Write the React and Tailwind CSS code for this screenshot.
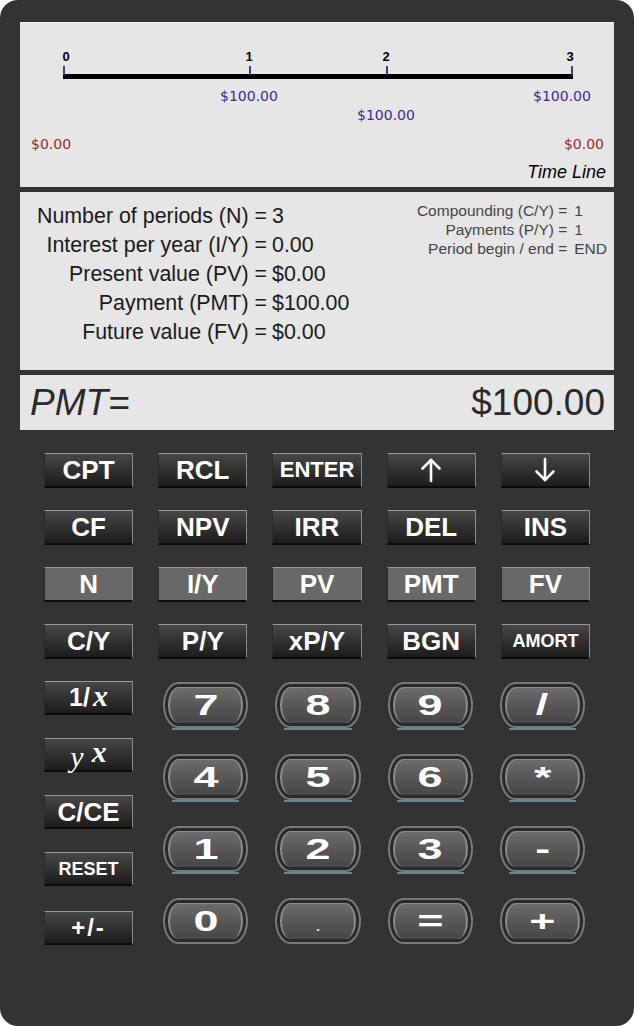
import React from 'react';

const FN_ROWS = [
  ['CPT', 'RCL', 'ENTER', 'UP', 'DOWN'],
  ['CF', 'NPV', 'IRR', 'DEL', 'INS'],
  ['N', 'I/Y', 'PV', 'PMT', 'FV'],
  ['C/Y', 'P/Y', 'xP/Y', 'BGN', 'AMORT'],
];

const TVM_KEYS = ['N', 'I/Y', 'PV', 'PMT', 'FV'];

const NUM_KEYS = ['7', '8', '9', '/', '4', '5', '6', '*', '1', '2', '3', '-', '0', '.', '=', '+'];

const serif = { fontFamily: '"Liberation Serif", serif' };

function Arrow({ up }) {
  return (
    <svg width="22" height="26" viewBox="0 0 22 26" fill="none" stroke="white" strokeWidth="2.6" strokeLinecap="round" strokeLinejoin="round">
      {up ? (
        <>
          <path d="M11 24V3" />
          <path d="M2.5 11.5L11 3l8.5 8.5" />
        </>
      ) : (
        <>
          <path d="M11 2v21" />
          <path d="M2.5 14.5L11 23l8.5-8.5" />
        </>
      )}
    </svg>
  );
}

const keyBase =
  'flex items-center justify-center text-white font-bold leading-none border-t border-t-[#9a9a9a] border-r border-r-[#8a8a8a] border-l border-l-[#2a2a2a] border-b-2 border-b-[#0a0a0a]';

function FnKey({ label, active }) {
  let content = label;
  if (label === 'UP') content = <Arrow up />;
  if (label === 'DOWN') content = <Arrow />;
  const size = label === 'ENTER' ? 'text-[22px]' : label === 'AMORT' ? 'text-[18px]' : 'text-[26px]';
  return (
    <div className={`h-[35px] ${keyBase} ${active ? 'bg-[#686868]' : 'bg-linear-to-b from-[#474747] to-[#1c1c1c]'} ${size}`}>
      {content}
    </div>
  );
}

function SideKey({ children, text = 'text-[26px]' }) {
  return (
    <div className={`h-[34px] ${keyBase} bg-linear-to-b from-[#474747] to-[#1c1c1c] ${text}`}>
      {children}
    </div>
  );
}

function NumKey({ label, last }) {
  return (
    <div className="h-[48px] flex flex-col">
      <div className="flex-1 rounded-[16px/24px] border-2 border-[#7a7a7a] bg-[#2a2a2a] p-[3px]">
        <div className="h-full rounded-[12px/20px] border-x-2 border-t border-[#8a8a8a] bg-linear-to-b from-[#6c6c6c] via-[#575757] to-[#464646] flex items-center justify-center">
          <span className="text-white font-black text-[29px] leading-none scale-x-[1.55] inline-block">
            {label === '.' ? <span className="text-[14px] font-normal">.</span> : label}
          </span>
        </div>
      </div>
      <div className={`h-[2px] mx-[9px] ${last ? 'bg-transparent' : 'bg-[#5d8a8a]'}`} />
    </div>
  );
}

export default function App() {
  return (
    <div className="bg-white w-[634px] h-[1026px]" style={{ fontFamily: '"Liberation Sans", Arial, sans-serif' }}>
      <div className="w-[634px] h-[1026px] bg-[#333333] rounded-[18px] pt-[22px]">
        {/* Time line */}
        <div className="mx-[20px] h-[165px] bg-[#e6e6e6] border-t border-t-[#f4f4f4] relative">
          <div className="absolute left-[43px] top-[51px] w-[510px] h-[5px] bg-black" />
          {[43, 229, 366, 551].map((x) => (
            <div key={x} className="absolute top-[43px] w-[2px] h-[9px] bg-[#4a3a7a]" style={{ left: x }} />
          ))}
          {[['0', 46], ['1', 229], ['2', 366], ['3', 550]].map(([t, x]) => (
            <div key={t} className="absolute top-[24px] text-[13px] font-bold text-black w-[20px] -ml-[10px] text-center" style={{ left: x }}>
              {t}
            </div>
          ))}
          <div style={{ fontFamily: '"DejaVu Sans", sans-serif' }} className="text-[14px] leading-none">
            <div className="absolute left-[200px] top-[66px] text-[#3b2a9a]">$100.00</div>
            <div className="absolute left-[337px] top-[85px] text-[#3b2a9a]">$100.00</div>
            <div className="absolute left-[513px] top-[66px] text-[#3b2a9a]">$100.00</div>
            <div className="absolute left-[11px] top-[114px] text-[#a02a24]">$0.00</div>
            <div className="absolute right-[10px] top-[114px] text-[#a02a24]">$0.00</div>
          </div>
          <div className="absolute right-[8px] bottom-[1px] text-[18px] italic text-black">Time Line</div>
        </div>

        {/* Values */}
        <div className="mx-[20px] mt-[5px] h-[178px] bg-[#e6e6e6] flex items-start justify-between pt-[9px] pr-[7px]">
          <div className="grid grid-cols-[247px_auto] gap-x-[5px] content-start text-[21.4px] leading-[29px] text-[#1a1a1a] mt-[1px]">
            {[
              ['Number of periods (N) =', '3'],
              ['Interest per year (I/Y) =', '0.00'],
              ['Present value (PV) =', '$0.00'],
              ['Payment (PMT) =', '$100.00'],
              ['Future value (FV) =', '$0.00'],
            ].map(([l, v]) => (
              <React.Fragment key={l}>
                <span className="text-right whitespace-nowrap">{l}</span>
                <span>{v}</span>
              </React.Fragment>
            ))}
          </div>
          <div className="grid grid-cols-[auto_auto] gap-x-[7px] content-start text-[15.5px] leading-[19px] text-[#444]">
            {[
              ['Compounding (C/Y) =', '1'],
              ['Payments (P/Y) =', '1'],
              ['Period begin / end =', 'END'],
            ].map(([l, v]) => (
              <React.Fragment key={l}>
                <span className="text-right whitespace-nowrap">{l}</span>
                <span>{v}</span>
              </React.Fragment>
            ))}
          </div>
        </div>

        {/* Display */}
        <div className="mx-[20px] mt-[5px] h-[55px] bg-[#e6e6e6] flex items-center justify-between pl-[10px] pr-[9px] text-[37px] text-[#2a2a2a]">
          <span className="italic">PMT=</span>
          <span>$100.00</span>
        </div>

        {/* Function keys */}
        <div className="mt-[23px] pl-[44px] w-[590px] grid grid-cols-5 gap-x-[25px] gap-y-[22px]">
          {FN_ROWS.flat().map((k, i) => (
            <FnKey key={i} label={k} active={i >= 10 && i < 15 && TVM_KEYS.includes(k)} />
          ))}
        </div>

        {/* Lower keys */}
        <div className="mt-[22px] pl-[44px] flex gap-[30px]">
          <div className="w-[89px] flex flex-col gap-[23px]">
            <SideKey text="text-[25px]">
              <span>1/</span>
              <span className="italic text-[30px] ml-[3px] -mt-[4px]" style={serif}>x</span>
            </SideKey>
            <SideKey>
              <span className="italic text-[30px] font-normal mt-[4px]" style={serif}>y</span>
              <span className="italic text-[30px] -mt-[6px] ml-[8px]" style={serif}>x</span>
            </SideKey>
            <SideKey>C/CE</SideKey>
            <SideKey text="text-[18px]">RESET</SideKey>
            <div className="mt-[2px]">
              <SideKey text="text-[24px] tracking-[2px]">+/-</SideKey>
            </div>
          </div>
          <div className="w-[422px] grid grid-cols-4 gap-x-[27px] gap-y-[24px] mt-[1px]">
            {NUM_KEYS.map((k, i) => (
              <NumKey key={k} label={k} last={i >= 12} />
            ))}
          </div>
        </div>
      </div>
    </div>
  );
}
